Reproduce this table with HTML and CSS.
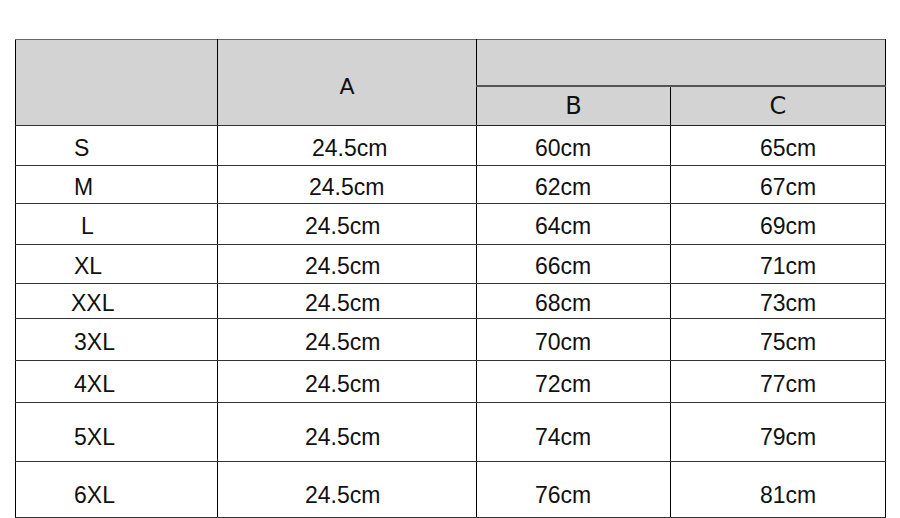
FILE: index.html
```html
<!DOCTYPE html>
<html>
<head>
<meta charset="utf-8">
<link rel="stylesheet" href="styles.css">
</head>
<body>
<table class="size-table">
  <colgroup>
    <col class="c-size">
    <col class="c-a">
    <col class="c-b">
    <col class="c-c">
  </colgroup>
  <thead>
    <tr class="h1">
      <th rowspan="2" class="hd"></th>
      <th rowspan="2" class="hd hd-a">A</th>
      <th colspan="2" class="hd hd-group"></th>
    </tr>
    <tr class="h2">
      <th class="hd hd-b">B</th>
      <th class="hd hd-c">C</th>
    </tr>
  </thead>
  <tbody>
    <tr class="r1"><td class="sz">S</td><td class="va va-s">24.5cm</td><td class="vb">60cm</td><td class="vc">65cm</td></tr>
    <tr class="r2"><td class="sz">M</td><td class="va va-m">24.5cm</td><td class="vb">62cm</td><td class="vc">67cm</td></tr>
    <tr class="r3"><td class="sz sz-l">L</td><td class="va">24.5cm</td><td class="vb">64cm</td><td class="vc">69cm</td></tr>
    <tr class="r4"><td class="sz">XL</td><td class="va">24.5cm</td><td class="vb">66cm</td><td class="vc">71cm</td></tr>
    <tr class="r5"><td class="sz sz-xxl">XXL</td><td class="va">24.5cm</td><td class="vb">68cm</td><td class="vc">73cm</td></tr>
    <tr class="r6"><td class="sz">3XL</td><td class="va">24.5cm</td><td class="vb">70cm</td><td class="vc">75cm</td></tr>
    <tr class="r7"><td class="sz">4XL</td><td class="va">24.5cm</td><td class="vb">72cm</td><td class="vc">77cm</td></tr>
    <tr class="r8"><td class="sz">5XL</td><td class="va">24.5cm</td><td class="vb">74cm</td><td class="vc">79cm</td></tr>
    <tr class="r9"><td class="sz">6XL</td><td class="va">24.5cm</td><td class="vb">76cm</td><td class="vc">81cm</td></tr>
  </tbody>
</table>
</body>
</html>
```
FILE: styles.css
```css
html, body {
  margin: 0;
  padding: 0;
  background: #ffffff;
}

body {
  padding: 39px 0 0 15px;
  overflow: hidden;
  height: 518px;
  box-sizing: border-box;
}

.size-table {
  border-collapse: collapse;
  table-layout: fixed;
  width: 870px;
  font-family: "Liberation Sans", Arial, sans-serif;
  font-size: 23px;
  color: #111;
}

.c-size { width: 202px; }
.c-a { width: 259px; }
.c-b { width: 194px; }
.c-c { width: 215px; }

.size-table th,
.size-table td {
  padding: 0;
  border-left: 1px solid #000;
  border-right: 1px solid #000;
  border-top: 1px solid #333;
  border-bottom: 1px solid #333;
  vertical-align: middle;
  line-height: 1;
}

.hd {
  background: #d3d3d3;
  font-family: "DejaVu Sans", sans-serif;
  font-weight: normal;
  color: #111;
  font-size: 24px;
  text-align: center;
}

.size-table thead tr.h1 th {
  border-top: 1px solid #666;
}

.hd-group {
  border-bottom: 2px solid #555 !important;
}

.size-table thead th.hd-a {
  font-size: 22px;
  vertical-align: top;
  padding-top: 36px;
}

.hd-b { padding-right: 14px; }
.hd-c { padding-left: 13px; }

.h1 { height: 46px; }
.h2 { height: 40px; }

.size-table thead tr.h2 th {
  border-bottom: 1px solid #222;
}

.r1 { height: 40px; }
.r2 { height: 38px; }
.r3 { height: 41px; }
.r4 { height: 39px; }
.r5 { height: 35px; }
.r6 { height: 42px; }
.r7 { height: 42px; }
.r8 { height: 59px; }
.r9 { height: 56px; }

.size-table tbody td {
  padding-top: 5px;
  text-align: left;
}

.size-table tbody .r8 td { padding-top: 10px; }
.size-table tbody .r9 td { padding-top: 11px; }

.size-table tbody td.sz { padding-left: 58px; }
.size-table tbody td.sz-l { padding-left: 65px; }
.size-table tbody td.sz-xxl { padding-left: 55px; }
.size-table tbody td.va { padding-left: 87px; }
.size-table tbody td.va-s { padding-left: 94px; }
.size-table tbody td.va-m { padding-left: 91px; }
.size-table tbody td.vb { padding-left: 58px; }
.size-table tbody td.vc { padding-left: 89px; }
```
